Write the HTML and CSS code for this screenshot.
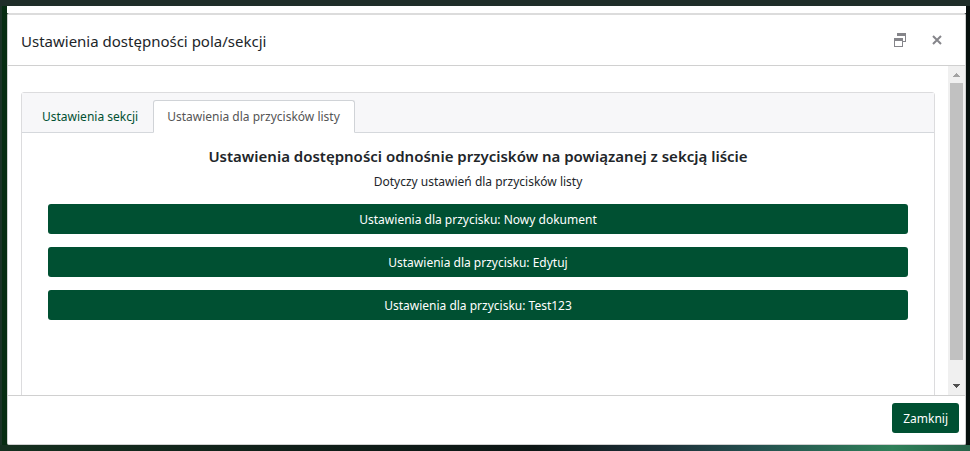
FILE: index.html
```
<!DOCTYPE html>
<html lang="pl">
<head>
    <meta charset="utf-8">
    <title>Ustawienia dostępności pola/sekcji</title>
    <link rel="stylesheet" href="styles.css">
</head>
<body>
    <div class="page-strip"></div>
    <div class="modal" role="dialog" aria-labelledby="modal-title">
        <header class="modal-header">
            <h1 id="modal-title">Ustawienia dostępności pola/sekcji</h1>
            <button type="button" class="icon-btn" aria-label="Przywróć">
                <svg width="12" height="14" viewBox="0 0 12 14" shape-rendering="crispEdges" fill="#85858a">
                    <path d="M3 0h9v3H3zM11 3h1v6h-1zM9 8h3v1H9zM0 5h9v3H0zM0 8h1v6H0zM8 8h1v6H8zM0 13h9v1H0z"/>
                </svg>
            </button>
            <button type="button" class="icon-btn" aria-label="Zamknij okno">
                <svg width="10" height="10" viewBox="0 0 10 10" fill="none" stroke="#85858a" stroke-width="2">
                    <path d="M1 1l8 8M9 1L1 9"/>
                </svg>
            </button>
        </header>

        <div class="modal-body">
            <div class="modal-content">
                <div class="card">
                    <nav class="tabs">
                        <a href="#section" class="tab">Ustawienia sekcji</a>
                        <a href="#list" class="tab active">Ustawienia dla przycisków listy</a>
                    </nav>
                    <div class="card-body" id="list">
                        <h2>Ustawienia dostępności odnośnie przycisków na powiązanej z sekcją liście</h2>
                        <p>Dotyczy ustawień dla przycisków listy</p>
                        <button type="button" class="btn btn-block">Ustawienia dla przycisku: Nowy dokument</button>
                        <button type="button" class="btn btn-block">Ustawienia dla przycisku: Edytuj</button>
                        <button type="button" class="btn btn-block">Ustawienia dla przycisku: Test123</button>
                    </div>
                </div>
            </div>
            <div class="scrollbar" aria-hidden="true">
                <svg width="7" height="4" viewBox="0 0 7 4" shape-rendering="crispEdges" fill="#a3a3a3">
                    <path d="M3 0h1v1h1v1h1v1h1v1H0V3h1V2h1V1h1z"/>
                </svg>
                <div class="scrollbar-thumb"></div>
                <svg width="7" height="4" viewBox="0 0 7 4" shape-rendering="crispEdges" fill="#505050">
                    <path d="M0 0h7v1H6v1H5v1H4v1H3V3H2V2H1V1H0z"/>
                </svg>
            </div>
        </div>

        <footer class="modal-footer">
            <button type="button" class="btn">Zamknij</button>
        </footer>
    </div>
</body>
</html>
```
FILE: styles.css
```
* {
    box-sizing: border-box;
}
body {
    display: flex;
    flex-direction: column;
    height: 100vh;
    margin: 0;
    padding: 6px 4px 6px 7px;
    background:
        linear-gradient(#1f2e29, #1f2e29) top / 100% 6px no-repeat,
        linear-gradient(90deg, #15301f, #101f19 30%, #0d1615 55%, #1d3039 68%, #24504f 78%, #2f8059 92%, #276349) bottom / 100% 6px no-repeat,
        linear-gradient(90deg, #1b3227 2px, #062c11 2px, #062c11 50%, #07100e 50%) #07100e;
    font-family: "Segoe UI", "Noto Sans", sans-serif;
    font-size: 12px;
    line-height: 20px;
    color: #212529;
}
.page-strip {
    height: 7px;
    background: #fff;
}
.modal {
    display: flex;
    flex: 1;
    flex-direction: column;
    min-height: 0;
    border: 1px solid #d0d0d0;
    border-top: 2px solid #dcdcdc;
    border-radius: 2px;
    background: #fff;
}
.modal-header {
    display: flex;
    align-items: center;
    height: 51px;
    padding: 0 14px 0 13px;
    border-bottom: 1px solid #d0d0d0;
}
h1 {
    flex: 1;
    margin: 0;
    padding-top: 2px;
    font-size: 15px;
    font-weight: 400;
    line-height: 24px;
}
.icon-btn {
    display: flex;
    align-items: center;
    justify-content: center;
    width: 28px;
    height: 28px;
    margin-left: 9px;
    padding: 0;
    border: 0;
    background: none;
    cursor: pointer;
}
.modal-body {
    display: flex;
    flex: 1;
    min-height: 0;
}
.modal-content {
    flex: 1;
    overflow: hidden;
    padding: 26px 13px 0;
}
.card {
    min-height: 360px;
    border: 1px solid #dcdcde;
    border-radius: 3px;
}
.tabs {
    display: flex;
    padding: 7px 6px 0;
    border-bottom: 1px solid #d5d8dc;
    background: #f7f7f9;
}
.tab {
    margin-bottom: -1px;
    padding: 6px 14px 5px 13px;
    border: 1px solid transparent;
    border-radius: 3px 3px 0 0;
    color: #005032;
    text-decoration: none;
}
.tab.active {
    border-color: #d0d3d7;
    border-bottom-color: #fff;
    background: #fff;
    color: #555;
}
.card-body {
    padding: 13px 26px;
    text-align: center;
}
h2 {
    margin: 0 0 6px;
    font-size: 15px;
    font-weight: 600;
    line-height: 20px;
}
p {
    margin: 0 0 12px;
}
.btn {
    padding: 6px 11px 4px;
    border: 0;
    border-radius: 3px;
    background: #005032;
    color: #fff;
    font: inherit;
    cursor: pointer;
}
.btn-block {
    display: block;
    width: 100%;
    margin-bottom: 13px;
}
.scrollbar {
    display: flex;
    flex-direction: column;
    align-items: center;
    justify-content: space-between;
    width: 17px;
    padding: 7px 0;
    background: #f0f0f0;
}
.scrollbar-thumb {
    flex: 0 0 88%;
    width: 13px;
    margin: 6px 0 auto;
    background: #c1c1c1;
}
.modal-footer {
    display: flex;
    justify-content: flex-end;
    padding: 7px 6px 11px;
    border-top: 1px solid #d0d0d0;
}
```
